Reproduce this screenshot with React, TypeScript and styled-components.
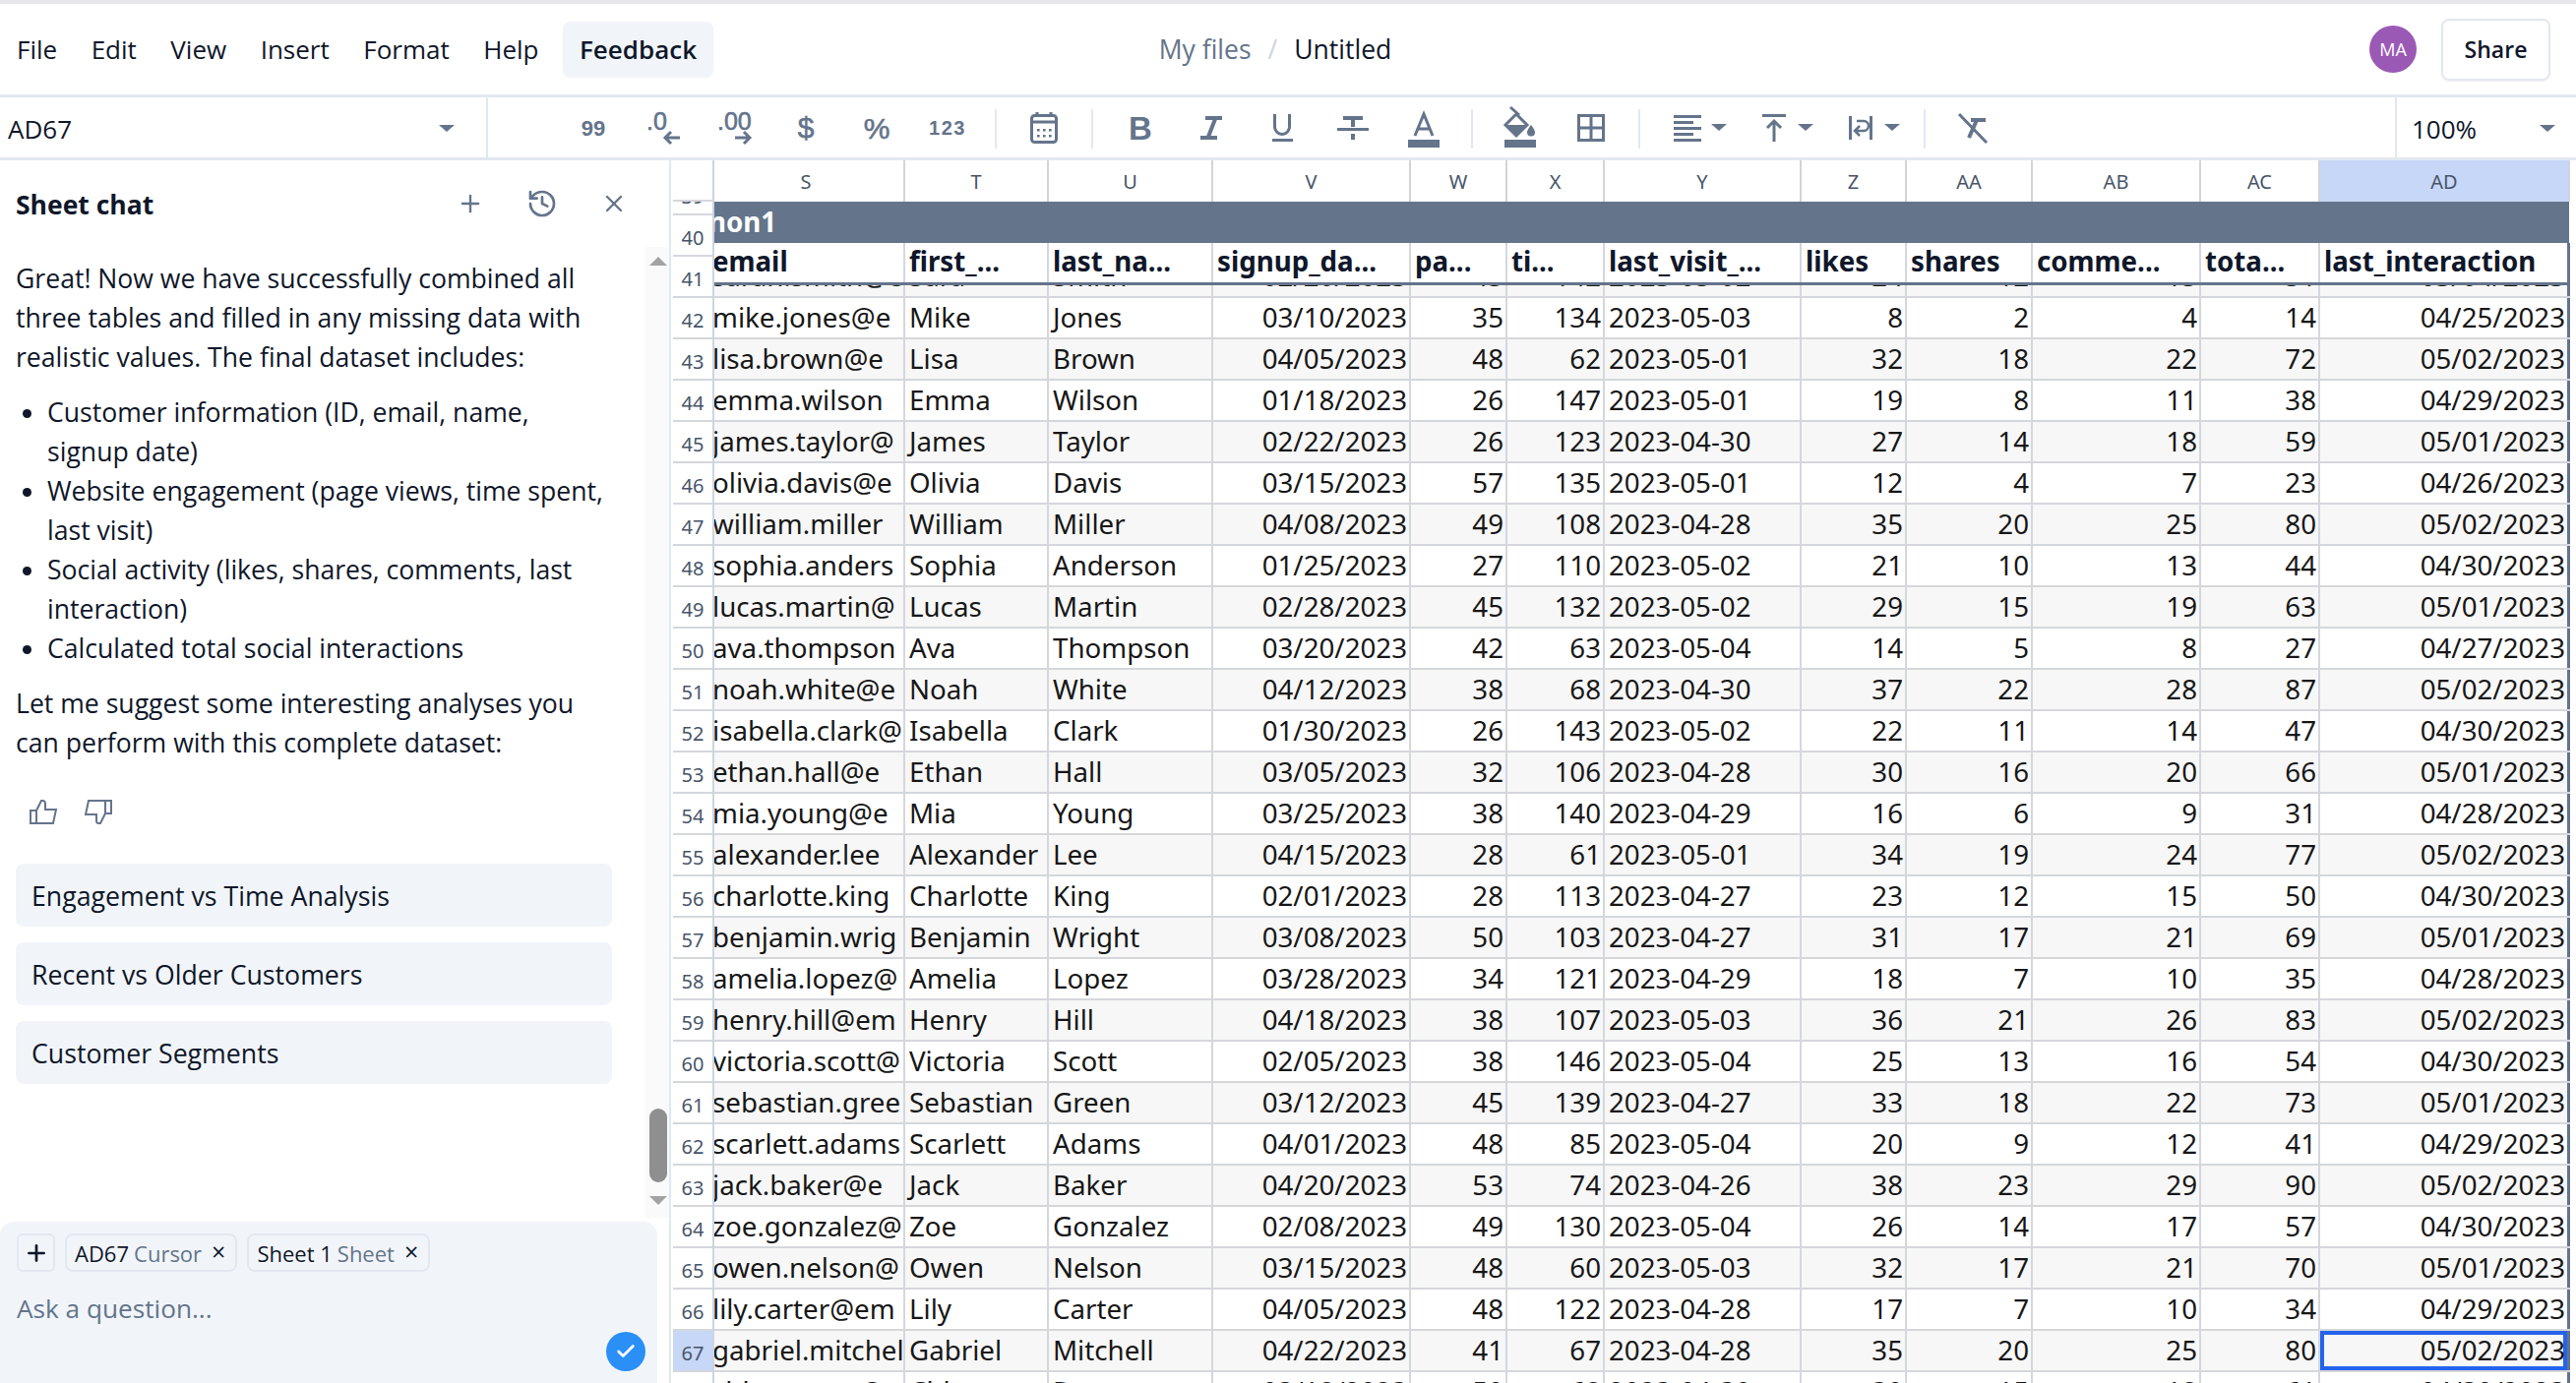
import React from "react";
import styled, { createGlobalStyle } from "styled-components";
import { History, Plus, X, Check } from "lucide-react";

const SLATE = "#64748b";
const UI_FONT = `"Open Sans", "Noto Sans", sans-serif`;
const WIDTHS = [200, 146, 167, 201, 98, 99, 200, 107, 128, 171, 121, 254];
const LETTERS = ["S", "T", "U", "V", "W", "X", "Y", "Z", "AA", "AB", "AC", "AD"];
const HEADS = ["email", "first_...", "last_na...", "signup_da...", "pa...", "ti...", "last_visit_...", "likes", "shares", "comme...", "tota...", "last_interaction"];
const RIGHT = [false, false, false, true, true, true, false, true, true, true, true, true];

const ROWS: [number, string][] = [
  [41, "sarah.smith@e|Sara|Smith|02/20/2023|45|142|2023-05-02|24|12|15|51|03/04/2023"],
  [42, "mike.jones@e|Mike|Jones|03/10/2023|35|134|2023-05-03|8|2|4|14|04/25/2023"],
  [43, "lisa.brown@e|Lisa|Brown|04/05/2023|48|62|2023-05-01|32|18|22|72|05/02/2023"],
  [44, "emma.wilson|Emma|Wilson|01/18/2023|26|147|2023-05-01|19|8|11|38|04/29/2023"],
  [45, "james.taylor@|James|Taylor|02/22/2023|26|123|2023-04-30|27|14|18|59|05/01/2023"],
  [46, "olivia.davis@e|Olivia|Davis|03/15/2023|57|135|2023-05-01|12|4|7|23|04/26/2023"],
  [47, "william.miller|William|Miller|04/08/2023|49|108|2023-04-28|35|20|25|80|05/02/2023"],
  [48, "sophia.anders|Sophia|Anderson|01/25/2023|27|110|2023-05-02|21|10|13|44|04/30/2023"],
  [49, "lucas.martin@|Lucas|Martin|02/28/2023|45|132|2023-05-02|29|15|19|63|05/01/2023"],
  [50, "ava.thompson|Ava|Thompson|03/20/2023|42|63|2023-05-04|14|5|8|27|04/27/2023"],
  [51, "noah.white@e|Noah|White|04/12/2023|38|68|2023-04-30|37|22|28|87|05/02/2023"],
  [52, "isabella.clark@|Isabella|Clark|01/30/2023|26|143|2023-05-02|22|11|14|47|04/30/2023"],
  [53, "ethan.hall@e|Ethan|Hall|03/05/2023|32|106|2023-04-28|30|16|20|66|05/01/2023"],
  [54, "mia.young@e|Mia|Young|03/25/2023|38|140|2023-04-29|16|6|9|31|04/28/2023"],
  [55, "alexander.lee|Alexander|Lee|04/15/2023|28|61|2023-05-01|34|19|24|77|05/02/2023"],
  [56, "charlotte.king|Charlotte|King|02/01/2023|28|113|2023-04-27|23|12|15|50|04/30/2023"],
  [57, "benjamin.wrig|Benjamin|Wright|03/08/2023|50|103|2023-04-27|31|17|21|69|05/01/2023"],
  [58, "amelia.lopez@|Amelia|Lopez|03/28/2023|34|121|2023-04-29|18|7|10|35|04/28/2023"],
  [59, "henry.hill@em|Henry|Hill|04/18/2023|38|107|2023-05-03|36|21|26|83|05/02/2023"],
  [60, "victoria.scott@|Victoria|Scott|02/05/2023|38|146|2023-05-04|25|13|16|54|04/30/2023"],
  [61, "sebastian.gree|Sebastian|Green|03/12/2023|45|139|2023-04-27|33|18|22|73|05/01/2023"],
  [62, "scarlett.adams|Scarlett|Adams|04/01/2023|48|85|2023-05-04|20|9|12|41|04/29/2023"],
  [63, "jack.baker@e|Jack|Baker|04/20/2023|53|74|2023-04-26|38|23|29|90|05/02/2023"],
  [64, "zoe.gonzalez@|Zoe|Gonzalez|02/08/2023|49|130|2023-05-04|26|14|17|57|04/30/2023"],
  [65, "owen.nelson@|Owen|Nelson|03/15/2023|48|60|2023-05-03|32|17|21|70|05/01/2023"],
  [66, "lily.carter@em|Lily|Carter|04/05/2023|48|122|2023-04-28|17|7|10|34|04/29/2023"],
  [67, "gabriel.mitchel|Gabriel|Mitchell|04/22/2023|41|67|2023-04-28|35|20|25|80|05/02/2023"],
  [68, "chloe.perez@e|Chloe|Perez|03/18/2023|50|68|2023-04-30|30|15|18|61|04/30/2023"],
];

const GlobalStyle = createGlobalStyle`
  html, body { margin: 0; padding: 0; background: #fff; }
  * { box-sizing: border-box; }
`;

const Page = styled.div`
  width: 2618px;
  height: 1406px;
  overflow: hidden;
  display: flex;
  flex-direction: column;
  font-family: ${UI_FONT};
  color: #0f172a;
  background: #fff;
`;

/* ---------- menu bar ---------- */
const MenuBar = styled.header`
  height: 99px;
  flex: none;
  border-top: 4px solid #e5e7eb;
  border-bottom: 3px solid #e2e8f0;
  display: grid;
  grid-template-columns: 1fr auto 1fr;
  align-items: center;
  font-size: 26px;
`;
const MenuList = styled.nav`
  display: flex;
  align-items: center;
  padding-left: 17px;
  gap: 34.500px;
`;
const MenuItem = styled.span`
  color: #0f172a;
`;
const FeedbackButton = styled.span`
  margin-left: -10px;
  height: 56px;
  padding: 0 17px;
  display: flex;
  align-items: center;
  border-radius: 8px;
  background: #f1f5f9;
  font-weight: 600;
  box-shadow: 0 1px 2px rgba(15, 23, 42, 0.05);
`;
const Crumbs = styled.div`
  display: flex;
  align-items: center;
  gap: 17px;
  margin-right: 26px;
  font-size: 26.500px;
`;
const CrumbLink = styled.span`
  color: ${SLATE};
`;
const CrumbSlash = styled.span`
  color: #cbd5e1;
`;
const Actions = styled.div`
  display: flex;
  justify-content: flex-end;
  align-items: center;
  gap: 25px;
  padding-right: 26px;
`;
const Avatar = styled.span`
  width: 48px;
  height: 48px;
  border-radius: 50%;
  background: #9b59b6;
  color: #fff;
  font-size: 18px;
  display: flex;
  align-items: center;
  justify-content: center;
`;
const ShareButton = styled.span`
  width: 111px;
  height: 63px;
  border: 2px solid #e2e8f0;
  border-radius: 8px;
  display: flex;
  align-items: center;
  justify-content: center;
  font-size: 23px;
  font-weight: 600;
  box-shadow: 0 1px 2px rgba(15, 23, 42, 0.06);
`;

/* ---------- toolbar ---------- */
const Toolbar = styled.div`
  height: 64px;
  flex: none;
  border-bottom: 3px solid #e2e8f0;
  display: flex;
  align-items: stretch;
`;
const NameBox = styled.div`
  width: 496px;
  flex: none;
  border-right: 2px solid #e2e8f0;
  margin-right: 71px;
  padding: 2px 32px 0 8px;
  display: flex;
  align-items: center;
  justify-content: space-between;
  font-size: 26px;
`;
const Caret = styled.i`
  display: block;
  flex: none;
  border-left: 8px solid transparent;
  border-right: 8px solid transparent;
  border-top: 7px solid ${SLATE};
`;
const ToolSlot = styled.span`
  width: 72px;
  flex: none;
  display: flex;
  align-items: center;
  justify-content: center;
`;
const DropSlot = styled.span`
  width: 88px;
  flex: none;
  padding-left: 12px;
  display: flex;
  align-items: center;
`;
const ToolSep = styled.span`
  width: 2px;
  flex: none;
  margin: 12px 12px 9px;
  background: #e2e8f0;
`;
const ZoomBox = styled.div`
  margin-left: auto;
  width: 184px;
  flex: none;
  border-left: 2px solid #e2e8f0;
  padding: 2px 21px 0 15px;
  display: flex;
  align-items: center;
  justify-content: space-between;
  font-size: 26px;
`;
const IconText = styled.text<{ $weight?: number; $size: number }>`
  font-family: "Liberation Sans", sans-serif;
  font-size: ${(p) => p.$size}px;
  font-weight: ${(p) => p.$weight ?? 400};
  fill: ${SLATE};
`;
const ToolSvg = styled.svg`
  width: 48px;
  height: 48px;
  display: block;
  flex: none;
  fill: none;
  stroke: ${SLATE};
  stroke-width: 3;
`;
const Solid = styled.path`
  fill: ${SLATE};
  stroke: none;
`;

const Tool = ({ children }: { children: React.ReactNode }) => <ToolSvg viewBox="0 0 48 48">{children}</ToolSvg>;

/* ---------- workspace ---------- */
const Workspace = styled.main`
  flex: 1;
  min-height: 0;
  display: flex;
`;
const ChatPanel = styled.aside`
  width: 682px;
  flex: none;
  border-right: 2px solid #e2e8f0;
  display: flex;
  flex-direction: column;
`;
const ChatHeader = styled.div`
  height: 88px;
  flex: none;
  padding: 0 42px 0 16px;
  display: flex;
  align-items: center;
  gap: 43px;
  color: ${SLATE};
`;
const ChatTitle = styled.h1`
  margin: 2px auto 0 0;
  font-size: 26.500px;
  font-weight: 700;
  color: #0f172a;
`;
const ChatMiddle = styled.div`
  flex: 1;
  min-height: 0;
  display: flex;
`;
const ChatScroll = styled.div`
  flex: 1;
  min-width: 0;
  padding: 12px 33px 0 16px;
  font-size: 26.600px;
  line-height: 40px;
  color: #0f172a;
`;
const ChatText = styled.p`
  margin: 0 0 16px;
`;
const ChatList = styled.ul`
  margin: 0 0 16px;
  padding-left: 32px;
`;
const Feedback = styled.div`
  display: flex;
  gap: 28px;
  padding: 22px 0 0 14px;
  height: 87px;
`;
const ThumbSvg = styled.svg`
  width: 28px;
  height: 25px;
  fill: none;
  stroke: ${SLATE};
  stroke-width: 2;
`;
const Suggestion = styled.div`
  height: 64px;
  margin-bottom: 16px;
  padding: 2px 16px 0;
  display: flex;
  align-items: center;
  border-radius: 8px;
  background: #f1f5f9;
  font-size: 26.700px;
`;
const ScrollTrack = styled.div`
  width: 25px;
  flex: none;
  margin-bottom: 4px;
  background: #fafafa;
  display: flex;
  flex-direction: column;
  align-items: center;
  padding: 10px 0 0 2px;
`;
const ScrollUp = styled.i`
  border-left: 9px solid transparent;
  border-right: 9px solid transparent;
  border-bottom: 9px solid #a3a3a3;
`;
const ScrollDown = styled.i`
  border-left: 9px solid transparent;
  border-right: 9px solid transparent;
  border-top: 9px solid #a3a3a3;
  margin-top: 14px;
`;
const ScrollThumb = styled.div`
  width: 18px;
  height: 75px;
  margin-top: 857px;
  border-radius: 9px;
  background: #8f8f8f;
`;
const Composer = styled.div`
  height: 164px;
  flex: none;
  width: 668px;
  background: #f1f5f9;
  border-radius: 14px 14px 0 0;
  padding: 12px 12px 0 17px;
  display: flex;
  flex-direction: column;
`;
const ChipRow = styled.div`
  display: flex;
  gap: 10px;
`;
const AddChip = styled.span`
  width: 39px;
  height: 39px;
  border: 2px solid #e2e8f0;
  border-radius: 6px;
  display: flex;
  align-items: center;
  justify-content: center;
  color: #0f172a;
`;
const Chip = styled.span`
  height: 39px;
  padding: 0 10px 0 8px;
  border: 2px solid #e2e8f0;
  border-radius: 8px;
  display: flex;
  align-items: center;
  gap: 5px;
  font-size: 22px;
  white-space: nowrap;
`;
const ChipKind = styled.span`
  color: ${SLATE};
`;
const ChipClose = styled.span`
  margin-left: 5px;
  margin-top: -4px;
  font-size: 25px;
`;
const Question = styled.div`
  margin-top: 19px;
  font-size: 26.200px;
  line-height: 36px;
  color: ${SLATE};
`;
const SendRow = styled.div`
  display: flex;
  justify-content: flex-end;
  margin-top: 6px;
`;
const SendButton = styled.span`
  width: 40px;
  height: 40px;
  border-radius: 50%;
  background: #2a8ff7;
  color: #fff;
  display: flex;
  align-items: center;
  justify-content: center;
`;

/* ---------- sheet ---------- */
const Sheet = styled.section`
  flex: 1;
  min-width: 0;
  padding-left: 2px;
  display: flex;
  flex-direction: column;
  font-family: "Noto Sans", "Open Sans", sans-serif;
  font-size: 27.700px;
  color: #171717;
`;
const ColumnBar = styled.div`
  height: 42px;
  flex: none;
  display: flex;
`;
const Corner = styled.div`
  width: 42px;
  flex: none;
  border-right: 2px solid #cbd5e1;
  border-bottom: 2px solid #d4d7dc;
  background: #fff;
`;
const ClipWindow = styled.div`
  flex: 1;
  min-width: 0;
  overflow: hidden;
`;
const Strip = styled.div`
  margin-left: -6px;
`;
const ColumnRow = styled.div`
  display: flex;
  height: 42px;
`;
const ColumnHead = styled.div<{ $active?: boolean }>`
  flex: none;
  display: flex;
  align-items: center;
  justify-content: center;
  border-right: 2px solid #d4d4d8;
  font-size: 20px;
  color: #475569;
  background: ${(p) => (p.$active ? "#c7d7f7" : "#fff")};
`;
const SheetBody = styled.div`
  flex: 1;
  min-height: 0;
  display: flex;
  overflow: hidden;
`;
const Gutter = styled.div`
  width: 42px;
  flex: none;
  margin-top: -28px;
  border-right: 2px solid #cbd5e1;
`;
const RowNumber = styled.div<{ $active?: boolean }>`
  height: 42px;
  padding-top: 4px;
  display: flex;
  align-items: center;
  justify-content: center;
  border-bottom: 2px solid #d4d7dc;
  font-size: 20px;
  color: #475569;
  background: ${(p) => (p.$active ? "#c7d7f7" : "#fff")};
`;
const FrozenBand = styled.div`
  height: 42px;
  width: 1892px;
  padding-left: 1px;
  margin-left: -1px;
  background: #64748b;
  color: #fff;
  font-weight: 700;
  line-height: 40px;
  position: relative;
  z-index: 1;
`;
const HeaderRow = styled.div`
  display: flex;
  height: 43px;
  width: 1892px;
  background: #fff;
  border-bottom: 3px solid ${SLATE};
  position: relative;
  z-index: 1;
`;
const DataRow = styled.div<{ $striped: boolean; $partial?: boolean }>`
  display: flex;
  width: 1892px;
  height: 42px;
  margin-top: ${(p) => (p.$partial ? "-29px" : 0)};
  background: ${(p) => (p.$striped ? "#f7f7f7" : "#fff")};
  border-bottom: 2px solid #d4d7dc;
`;
const Cell = styled.div<{ $right?: boolean; $selected?: boolean; $last?: boolean }>`
  flex: none;
  padding: 0 2px 0 4px;
  overflow: hidden;
  white-space: nowrap;
  line-height: 39px;
  text-align: ${(p) => (p.$right ? "right" : "left")};
  border-right: ${(p) => (p.$last ? `3px solid ${SLATE}` : "2px solid #d4d7dc")};
  box-shadow: ${(p) => (p.$selected ? "inset 0 0 0 4px #2563eb" : "none")};
`;
const HeadCell = styled(Cell)`
  font-weight: 700;
  color: #0f172a;
  height: 40px;
  line-height: 37px;
`;

export default function App() {
  return (
    <Page>
      <GlobalStyle />
      <MenuBar>
        <MenuList>
          {["File", "Edit", "View", "Insert", "Format", "Help"].map((m) => (
            <MenuItem key={m}>{m}</MenuItem>
          ))}
          <FeedbackButton>Feedback</FeedbackButton>
        </MenuList>
        <Crumbs>
          <CrumbLink>My files</CrumbLink>
          <CrumbSlash>/</CrumbSlash>
          <span>Untitled</span>
        </Crumbs>
        <Actions>
          <Avatar>MA</Avatar>
          <ShareButton>Share</ShareButton>
        </Actions>
      </MenuBar>

      <Toolbar>
        <NameBox>
          AD67
          <Caret />
        </NameBox>
        <ToolSlot>
          <Tool>
            <IconText x="24" y="32" textAnchor="middle" stroke="none" $size={22} $weight={700}>99</IconText>
          </Tool>
        </ToolSlot>
        <ToolSlot>
          <Tool>
            <IconText x="6" y="26" stroke={SLATE} strokeWidth={0.6} $size={25}>.0</IconText>
            <path d="M40 34H25M31 28l-6 6 6 6" />
          </Tool>
        </ToolSlot>
        <ToolSlot>
          <Tool>
            <IconText x="6" y="26" stroke={SLATE} strokeWidth={0.6} $size={25}>.00</IconText>
            <path d="M24 34h15M33 28l6 6-6 6" />
          </Tool>
        </ToolSlot>
        <ToolSlot>
          <Tool>
            <IconText x="24" y="34" textAnchor="middle" stroke={SLATE} strokeWidth={0.6} $size={30}>$</IconText>
          </Tool>
        </ToolSlot>
        <ToolSlot>
          <Tool>
            <IconText x="24" y="35" textAnchor="middle" stroke={SLATE} strokeWidth={0.6} $size={30}>%</IconText>
          </Tool>
        </ToolSlot>
        <ToolSlot>
          <Tool>
            <IconText x="24" y="31" textAnchor="middle" stroke="none" $size={20} $weight={700} letterSpacing={1.5}>123</IconText>
          </Tool>
        </ToolSlot>
        <ToolSep />
        <ToolSlot>
          <Tool>
            <rect x="11.500" y="11.500" width="25" height="27" rx="3" />
            <path d="M11 18h26M17 8v5M31 8v5" />
            <Solid d="M17 25h2.600v2.600H17zM23 25h2.600v2.600H23zM29 25h2.600v2.600H29zM17 31h2.600v2.600H17zM23 31h2.600v2.600H23zM29 31h2.600v2.600H29z" />
          </Tool>
        </ToolSlot>
        <ToolSep />
        <ToolSlot>
          <Tool>
            <IconText x="24" y="36" textAnchor="middle" stroke="none" $size={33} $weight={700}>B</IconText>
          </Tool>
        </ToolSlot>
        <ToolSlot>
          <Tool>
            <Solid d="M18 12h17v4H18zM13 32h17v4H13z" />
            <path d="M28 15l-7 18" strokeWidth="4" />
          </Tool>
        </ToolSlot>
        <ToolSlot>
          <Tool>
            <path d="M16.500 10v13a7.500 7.500 0 0 0 15 0V10" />
            <Solid d="M14 35h21v3H14z" />
          </Tool>
        </ToolSlot>
        <ToolSlot>
          <Tool>
            <Solid d="M14 12h20v4H14zM22 16h4v7h-4zM8 24h32v3H8zM22 30h4v6h-4z" />
          </Tool>
        </ToolSlot>
        <ToolSlot>
          <Tool>
            <path d="M15 32l9-22 9 22M18 25h12" />
            <Solid d="M8 36h32v8H8z" />
          </Tool>
        </ToolSlot>
        <ToolSep />
        <ToolSlot>
          <Tool>
            <path d="M14 3l9 8" />
            <path d="M20 10l11 11-11 11-11-11z" />
            <Solid d="M9 21h22L20 32z" />
            <Solid d="M35 21s-4 5-4 7.500a4 4 0 0 0 8 0c0-2.500-4-7.500-4-7.500z" />
            <Solid d="M8 36h32v8H8z" />
          </Tool>
        </ToolSlot>
        <ToolSlot>
          <Tool>
            <rect x="11.500" y="11.500" width="25" height="25" />
            <path d="M24 11v26M11 24h26" />
          </Tool>
        </ToolSlot>
        <ToolSep />
        <DropSlot>
          <Tool>
            <path d="M10 12.500h28M10 18.500h20M10 24.500h28M10 30.500h20M10 36.500h28" />
          </Tool>
          <Caret />
        </DropSlot>
        <DropSlot>
          <Tool>
            <path d="M12 11.500h24M24 38V17M17 24l7-7 7 7" />
          </Tool>
          <Caret />
        </DropSlot>
        <DropSlot>
          <Tool>
            <path d="M13.500 12v24M34.500 12v24" />
            <path d="M20 17h7a5 5 0 0 1 0 10h-8M23 22l-5 5 5 5" strokeWidth="2.500" />
          </Tool>
          <Caret />
        </DropSlot>
        <ToolSep />
        <ToolSlot>
          <Tool>
            <path d="M10 10l28 29" />
            <Solid d="M22 14h15v4H22z" />
            <path d="M28 16l-8 18" strokeWidth="4" />
          </Tool>
        </ToolSlot>
        <ZoomBox>
          100%
          <Caret />
        </ZoomBox>
      </Toolbar>

      <Workspace>
        <ChatPanel>
          <ChatHeader>
            <ChatTitle>Sheet chat</ChatTitle>
            <Plus size={28} strokeWidth={2} />
            <History size={32} strokeWidth={2} />
            <X size={28} strokeWidth={2} />
          </ChatHeader>
          <ChatMiddle>
            <ChatScroll>
              <ChatText>
                Great! Now we have successfully combined all three tables and filled in any missing data with realistic values. The final dataset includes:
              </ChatText>
              <ChatList>
                <li>Customer information (ID, email, name, signup date)</li>
                <li>Website engagement (page views, time spent, last visit)</li>
                <li>Social activity (likes, shares, comments, last interaction)</li>
                <li>Calculated total social interactions</li>
              </ChatList>
              <ChatText>
                Let me suggest some interesting analyses you can perform with this complete dataset:
              </ChatText>
              <Feedback>
                <ThumbSvg viewBox="0 0 28 25">
                  <path d="M1 11h6v13H1zM7 11l5-10h1.500a2.500 2.500 0 0 1 2.500 2.500V10h11l-3 14H7" />
                </ThumbSvg>
                <ThumbSvg viewBox="0 0 28 25">
                  <path d="M27 14h-6V1h6zM21 14l-5 10h-1.500a2.500 2.500 0 0 1-2.500-2.500V15H1L4 1h17" />
                </ThumbSvg>
              </Feedback>
              <Suggestion>Engagement vs Time Analysis</Suggestion>
              <Suggestion>Recent vs Older Customers</Suggestion>
              <Suggestion>Customer Segments</Suggestion>
            </ChatScroll>
            <ScrollTrack>
              <ScrollUp />
              <ScrollThumb />
              <ScrollDown />
            </ScrollTrack>
          </ChatMiddle>
          <Composer>
            <ChipRow>
              <AddChip>
                <Plus size={26} strokeWidth={2.5} />
              </AddChip>
              <Chip>
                AD67 <ChipKind>Cursor</ChipKind>
                <ChipClose>×</ChipClose>
              </Chip>
              <Chip>
                Sheet 1 <ChipKind>Sheet</ChipKind>
                <ChipClose>×</ChipClose>
              </Chip>
            </ChipRow>
            <Question>Ask a question...</Question>
            <SendRow>
              <SendButton>
                <Check size={22} strokeWidth={3} />
              </SendButton>
            </SendRow>
          </Composer>
        </ChatPanel>

        <Sheet>
          <ColumnBar>
            <Corner />
            <ClipWindow>
              <Strip>
                <ColumnRow>
                  {LETTERS.map((l, i) => (
                    <ColumnHead key={l} $active={l === "AD"} style={{ width: WIDTHS[i] }}>
                      {l}
                    </ColumnHead>
                  ))}
                </ColumnRow>
              </Strip>
            </ClipWindow>
          </ColumnBar>
          <SheetBody>
            <Gutter>
              {[39, 40, ...ROWS.map((r) => r[0])].map((n) => (
                <RowNumber key={n} $active={n === 67}>
                  {n}
                </RowNumber>
              ))}
            </Gutter>
            <ClipWindow>
              <Strip>
                <FrozenBand>non1</FrozenBand>
                <HeaderRow>
                  {HEADS.map((h, i) => (
                    <HeadCell key={h} $last={i === 11} style={{ width: WIDTHS[i] }}>
                      {h}
                    </HeadCell>
                  ))}
                </HeaderRow>
                {ROWS.map(([n, text]) => (
                  <DataRow key={n} $striped={n % 2 === 1} $partial={n === 41}>
                    {text.split("|").map((value, i) => (
                      <Cell
                        key={i}
                        $right={RIGHT[i]}
                        $last={i === 11}
                        $selected={n === 67 && i === 11}
                        style={{ width: WIDTHS[i] }}
                      >
                        {value}
                      </Cell>
                    ))}
                  </DataRow>
                ))}
              </Strip>
            </ClipWindow>
          </SheetBody>
        </Sheet>
      </Workspace>
    </Page>
  );
}
